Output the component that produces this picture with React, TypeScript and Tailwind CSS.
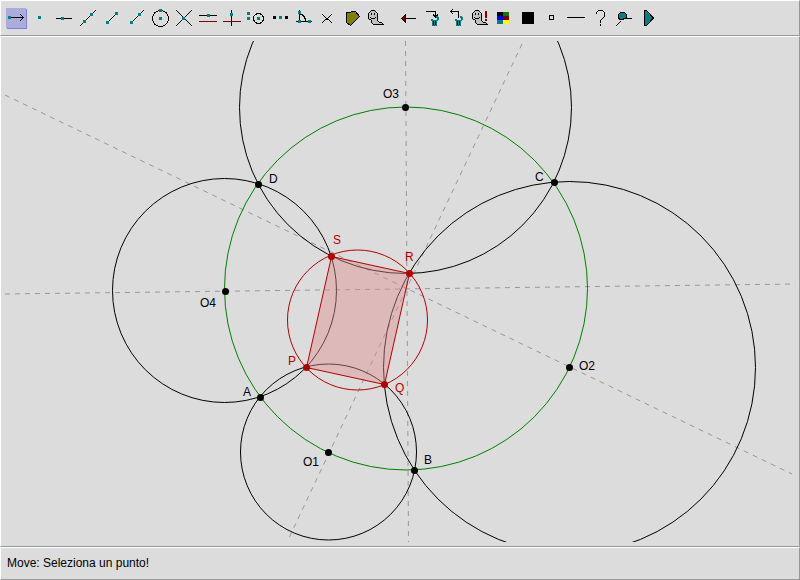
import { useState, type ReactNode } from "react";
import { cx } from "class-variance-authority";

const TEAL = "#008080";
const MAROON = "#800000";

// Small square handle used for points in the tool icons
function Dot({ x, y, fill = TEAL }: { x: number; y: number; fill?: string }) {
  return <rect x={x} y={y} width="3" height="3" fill={fill} stroke="none" />;
}

function Ghost() {
  return (
    <>
      <path
        d="M7.5 4.5h3l3 3v7l2 2h2l2 2h-10l-2-2v-2l-3-2v-5z"
        fill="#c0c0c0"
      />
      <path d="M7.5 7v2M10.5 7v2M6 11.5h1M7 12.5h4M11 11.5h1" />
    </>
  );
}

function Trash() {
  return (
    <g fill={TEAL} stroke="none">
      <path d="M11 13h2v1h5v1h-1v5h-5v-5h-1z" />
      <path d="M16 10h2v1h1v3h-1v1h-1v-3h-1z" />
      <path d="M13 15h1v4h-1zM15 15h1v4h-1z" fill="#000" />
    </g>
  );
}

interface Tool {
  name: string;
  icon: ReactNode;
}

const tools: Tool[] = [
  {
    name: "Move",
    icon: (
      <>
        <path d="M7 11.5h13M16 8l3.5 3.5L16 15" />
        <Dot x={4} y={10} />
      </>
    ),
  },
  { name: "Point", icon: <Dot x={10} y={10} /> },
  {
    name: "Point on object",
    icon: (
      <>
        <path d="M4 12.5h16" />
        <Dot x={9} y={11} />
      </>
    ),
  },
  {
    name: "Line",
    icon: (
      <>
        <path d="M4 20L20 4" />
        <Dot x={7} y={14} />
        <Dot x={14} y={7} />
      </>
    ),
  },
  {
    name: "Segment",
    icon: (
      <>
        <path d="M7 17L17 7" />
        <Dot x={6} y={15} />
        <Dot x={15} y={6} />
      </>
    ),
  },
  {
    name: "Ray",
    icon: (
      <>
        <path d="M7 17L20 4" />
        <Dot x={6} y={15} />
        <Dot x={14} y={7} />
      </>
    ),
  },
  {
    name: "Circle",
    icon: (
      <>
        <circle cx="12.5" cy="12.5" r="8" />
        <Dot x={11} y={3} />
        <Dot x={11} y={11} />
      </>
    ),
  },
  {
    name: "Intersection",
    icon: (
      <>
        <path d="M4 4l16 16M4 20L20 4" />
        <Dot x={10} y={11} />
      </>
    ),
  },
  {
    name: "Parallel",
    icon: (
      <>
        <path d="M3 9.5h18" />
        <path d="M3 15.5h18" stroke={MAROON} />
        <Dot x={11} y={8} />
      </>
    ),
  },
  {
    name: "Perpendicular",
    icon: (
      <>
        <path d="M3 15.5h18" stroke={MAROON} />
        <path d="M11.5 4v16" />
        <Dot x={10} y={7} />
      </>
    ),
  },
  {
    name: "Compass",
    icon: (
      <>
        <circle cx="14.5" cy="12.5" r="5" />
        <Dot x={3} y={6} />
        <Dot x={3} y={11} />
        <Dot x={13} y={11} />
      </>
    ),
  },
  {
    name: "Midpoint",
    icon: (
      <>
        <Dot x={5} y={10} fill="#000" />
        <Dot x={11} y={10} />
        <Dot x={17} y={10} fill="#000" />
      </>
    ),
  },
  {
    name: "Angle",
    icon: (
      <>
        <path d="M7.5 4v13M4 15.5h16M8 8.5h2l2 2 1 2 1 3" />
        <Dot x={6} y={5} />
        <Dot x={6} y={14} />
        <Dot x={16} y={14} />
      </>
    ),
  },
  {
    name: "Fixed angle",
    icon: <path d="M6 8l4 4h2l4-4M6 17l4-4h2l4 4" />,
  },
  {
    name: "Polygon",
    icon: <path d="M6.5 6.5l9-1 4 5-9 9-4-3z" fill="#808000" />,
  },
  { name: "Hide", icon: <Ghost /> },
];

const actions: Tool[] = [
  {
    name: "Delete last",
    icon: (
      <>
        <path d="M9 12.5h11" />
        <path d="M9.5 8.5v8l-4-4z" fill={MAROON} />
      </>
    ),
  },
  {
    name: "Delete",
    icon: (
      <>
        <path d="M6 5.5h9.5V11M13 8.5l2.5 2.5L18 8.5" />
        <Trash />
      </>
    ),
  },
  {
    name: "Undo delete",
    icon: (
      <>
        <path d="M14.5 12V5.5H6M9 3L6.5 5.5 9 8" />
        <Trash />
      </>
    ),
  },
  {
    name: "Show hidden",
    icon: (
      <>
        <Ghost />
        <path d="M17 5h2v7h-2zM17 13h2v2h-2z" fill={MAROON} stroke="none" />
      </>
    ),
  },
  {
    name: "Color",
    icon: (
      <g stroke="none">
        <rect x="5" y="6" width="6" height="4" fill="#000" />
        <rect x="11" y="6" width="6" height="4" fill="#008000" />
        <rect x="5" y="10" width="6" height="4" fill="#00f" />
        <rect x="11" y="10" width="6" height="4" fill={MAROON} />
        <rect x="5" y="14" width="6" height="4" fill={TEAL} />
        <rect x="11" y="14" width="6" height="4" fill="#ff0" />
      </g>
    ),
  },
  {
    name: "Default color",
    icon: <rect x="6" y="6" width="12" height="12" fill="#000" stroke="none" />,
  },
  { name: "Point style", icon: <rect x="9.5" y="9.5" width="4" height="4" /> },
  { name: "Line thickness", icon: <path d="M3 11.5h18" /> },
  {
    name: "Help",
    icon: <path d="M8.5 8V6.5l2-2h4l2 2v4l-4 4V17M12.5 18v2" />,
  },
  {
    name: "Pin",
    icon: (
      <>
        <path d="M4 20l5-5" />
        <path d="M7.5 13.5l-1-2v-3l2-2h4l2 2v3l-1 1-3 1z" fill={TEAL} />
        <path d="M11 12.5h9" />
      </>
    ),
  },
  {
    name: "Replay",
    icon: <path d="M8.5 4.5h2l7 7.5-7 7.5h-2z" fill={TEAL} />,
  },
];

function ToolButton({
  tool,
  active,
  onClick,
}: {
  tool: Tool;
  active: boolean;
  onClick?: () => void;
}) {
  return (
    <button
      type="button"
      aria-label={tool.name}
      aria-pressed={active}
      onClick={onClick}
      className="size-6 shrink-0"
    >
      <svg
        viewBox="0 0 24 24"
        className="size-6"
        fill="none"
        stroke="#000"
        shapeRendering="crispEdges"
      >
        {active && (
          <g stroke="none">
            <rect x="3" y="3" width="20" height="20" fill="#8080dc" />
            <rect x="2" y="2" width="20" height="20" fill="#acacdc" />
          </g>
        )}
        {tool.icon}
      </svg>
    </button>
  );
}

const points = [
  { name: "O1", x: 328, y: 452, lx: 303, ly: 466 },
  { name: "O2", x: 569, y: 367, lx: 579, ly: 370 },
  { name: "O3", x: 405, y: 107, lx: 383, ly: 98 },
  { name: "O4", x: 225, y: 291, lx: 200, ly: 307 },
  { name: "A", x: 260, y: 397, lx: 243, ly: 396 },
  { name: "B", x: 414, y: 470, lx: 424, ly: 464 },
  { name: "C", x: 554, y: 182, lx: 535, ly: 181 },
  { name: "D", x: 258, y: 184, lx: 269, ly: 183 },
  { name: "P", x: 306, y: 367, lx: 288, ly: 365, red: true },
  { name: "Q", x: 384, y: 384, lx: 395, ly: 392, red: true },
  { name: "R", x: 409, y: 273, lx: 405, ly: 261, red: true },
  { name: "S", x: 331, y: 256, lx: 333, ly: 244, red: true },
];

function Construction() {
  return (
    <svg
      viewBox="5 41 790 501"
      className="block h-auto w-full font-['Liberation_Sans',Arial,sans-serif] text-[12px]"
      role="img"
      aria-label="Construction"
    >
      <g fill="none">
        <g stroke="#989898" strokeDasharray="5 5">
          <path d="M5 95L792 474" />
          <path d="M5 294L795 284" />
          <path d="M405.5 41L408.5 542" />
          <path d="M522 44L288 540" />
        </g>
        <circle cx="406" cy="288.5" r="181.5" stroke="#008000" />
        <g stroke="#000">
          <circle cx="328.5" cy="452" r="88" />
          <circle cx="569.5" cy="367.5" r="186" />
          <circle cx="405.5" cy="107.5" r="166" />
          <circle cx="224.5" cy="290.5" r="112" />
        </g>
      </g>

      {/* Inner quadrilateral and its circumcircle */}
      <path
        d="M306.5 367.5L384.5 384.5 409.5 273.5 331.5 256.5z"
        fill="#e08e8e"
        fillOpacity="0.45"
        stroke="#b40000"
      />
      <circle cx="357.5" cy="320" r="70" fill="none" stroke="#b40000" />

      {points.map((p) => (
        <g key={p.name} fill={p.red ? "#b40000" : "#000"}>
          <circle cx={p.x + 0.5} cy={p.y + 0.5} r="3.5" />
          <text x={p.lx} y={p.ly}>
            {p.name}
          </text>
        </g>
      ))}
    </svg>
  );
}

const panel =
  "border border-t-white border-l-white border-r-[#989898] border-b-[#989898]";

export default function App() {
  const [current, setCurrent] = useState("Move");

  return (
    <div className="flex min-h-screen flex-col bg-[#dcdcdc] font-['Liberation_Sans',Arial,sans-serif] text-[12px] text-black">
      <header
        className={cx(panel, "flex min-h-9 flex-wrap items-center gap-x-2 px-[3px]")}
      >
        <div className="flex flex-wrap">
          {tools.map((tool) => (
            <ToolButton
              key={tool.name}
              tool={tool}
              active={tool.name === current}
              onClick={() => setCurrent(tool.name)}
            />
          ))}
        </div>
        <div className="flex flex-wrap">
          {actions.map((tool) => (
            <ToolButton key={tool.name} tool={tool} active={false} />
          ))}
        </div>
      </header>

      <main className={cx(panel, "grow p-1")}>
        <Construction />
      </main>

      <footer className={cx(panel, "px-1.5 py-2 leading-[15px]")}>
        {current}: Seleziona un punto!
      </footer>
    </div>
  );
}
